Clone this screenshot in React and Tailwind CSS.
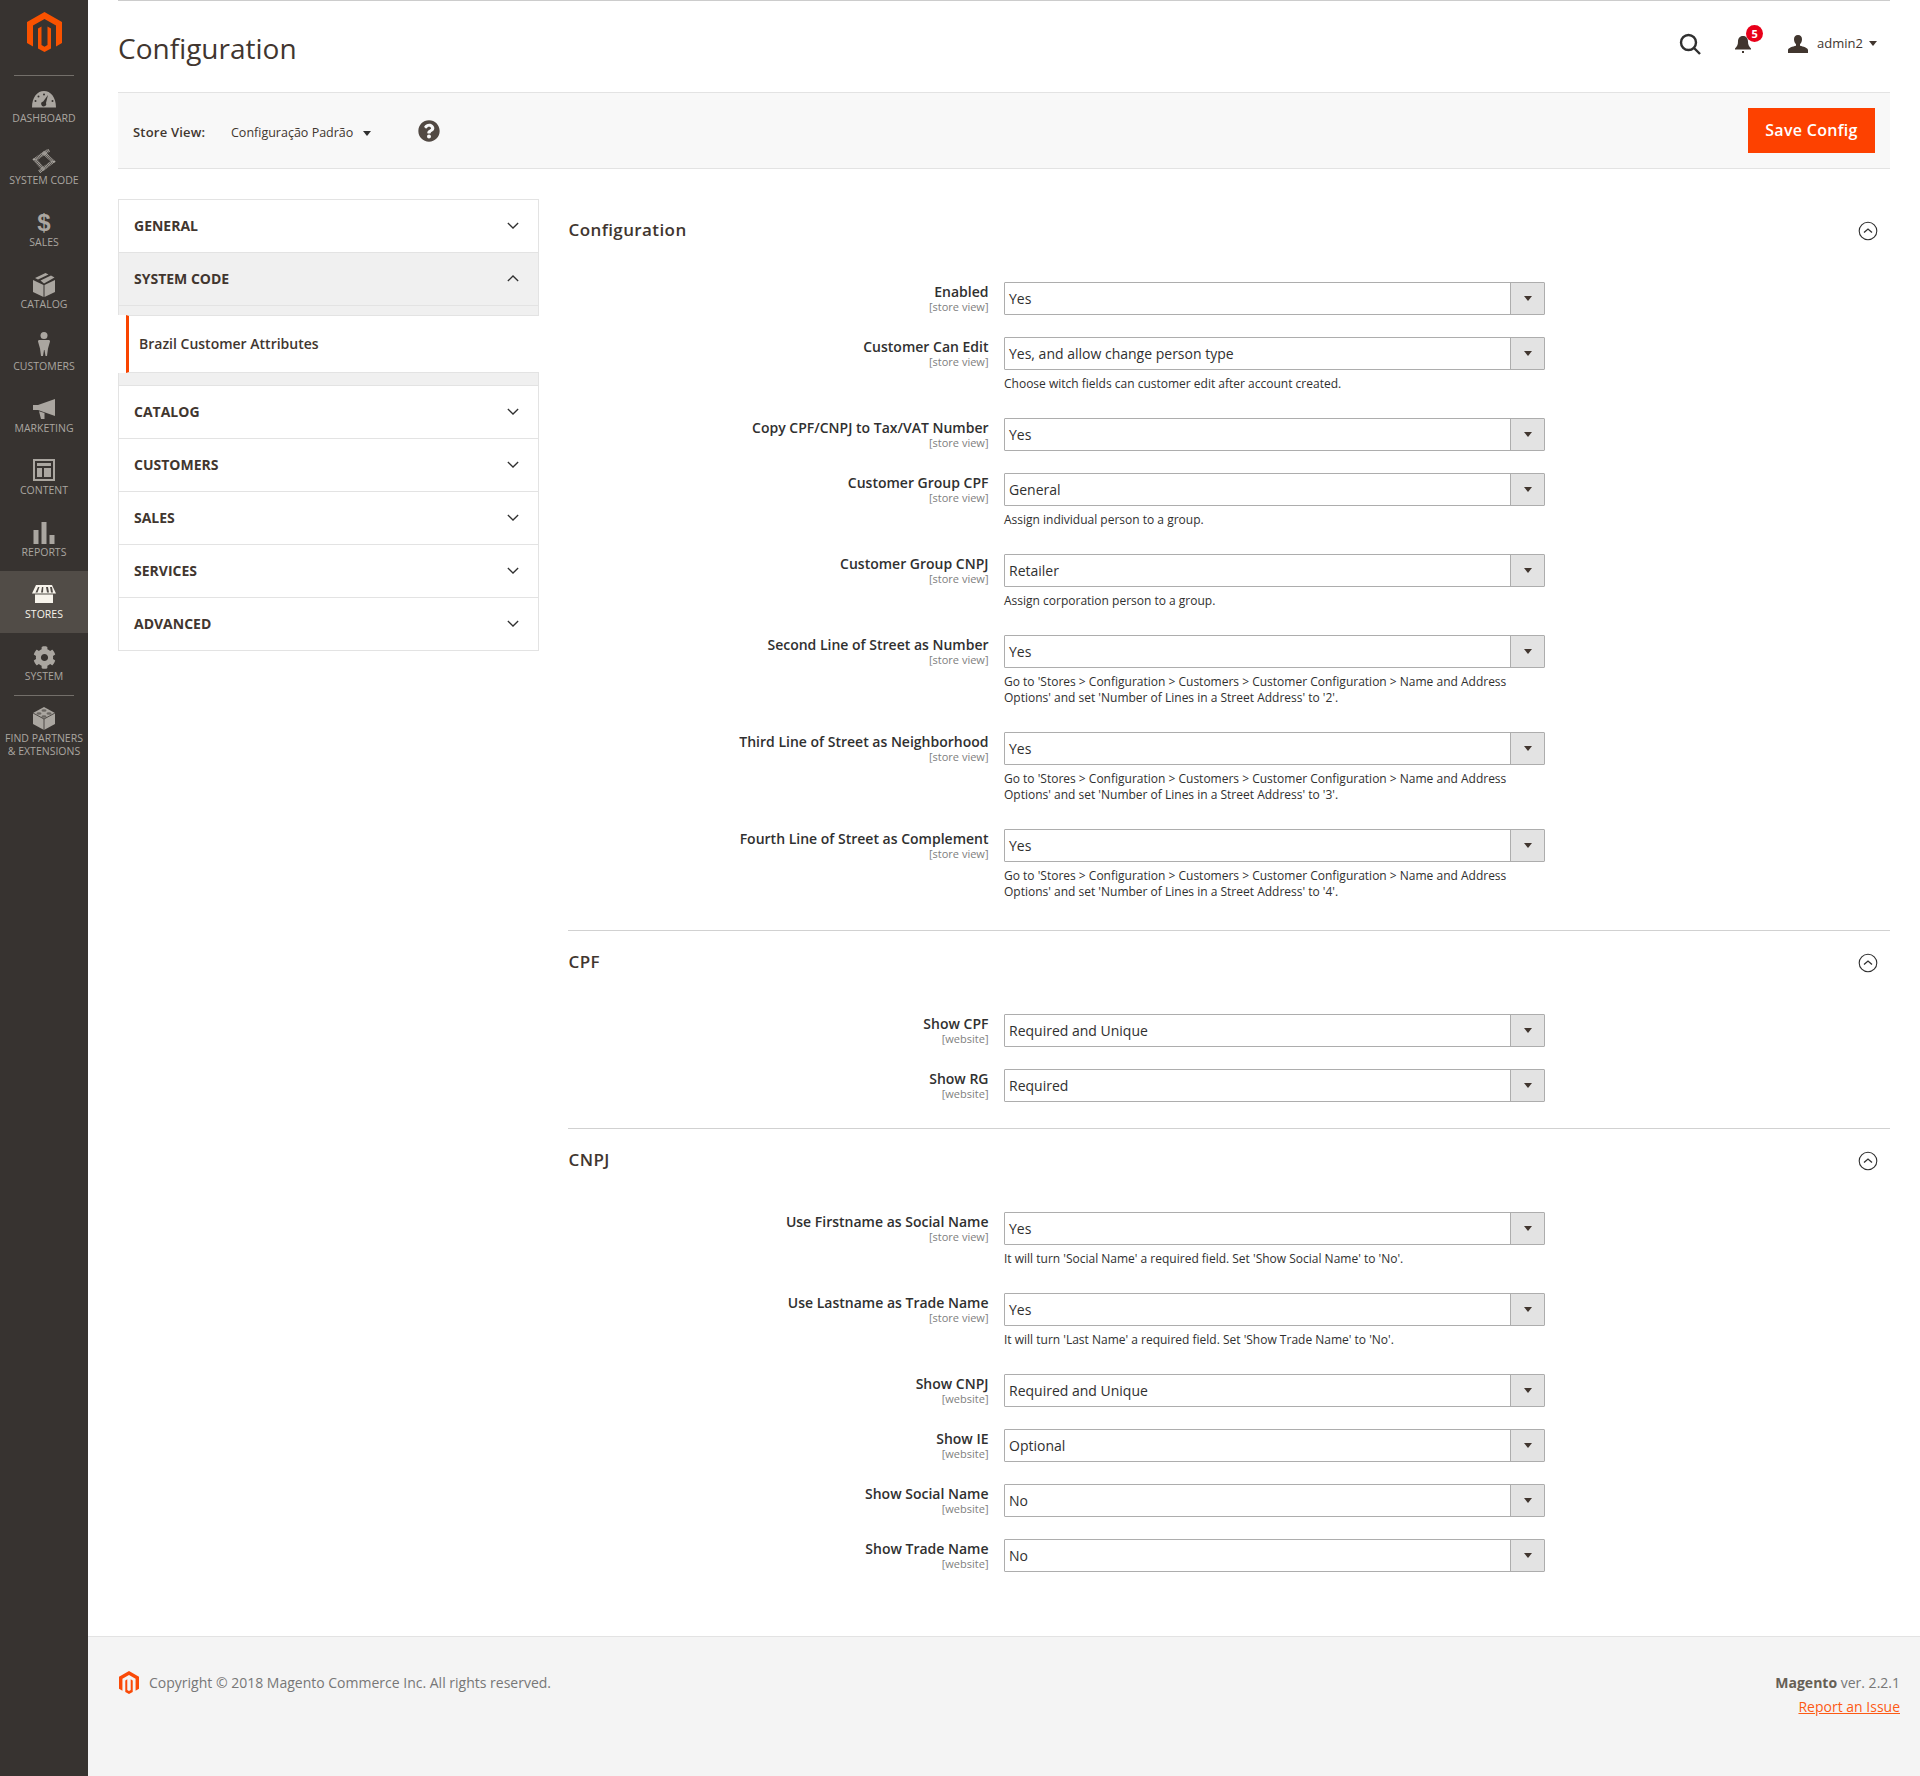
import React from "react";
import { FaCog, FaQuestionCircle } from "react-icons/fa";

const MagentoLogo = ({ className, fill = "#f95200" }) => (
  <svg viewBox="0 0 35 40" className={className} fill={fill}>
    <path d="M17.5 0 35 10v21l-6 3.5v-21L17.5 7 6 13.5v21L0 31V10z" />
    <path d="M11 16.5l3.500-2V33l3 1.800 3-1.800V14.500l3.500 2v20L17.500 40 11 36.500z" />
  </svg>
);

const icon = "w-[24px] h-[24px] fill-[#aaa6a0]";

const navItems = [
  {
    label: "DASHBOARD",
    icon: (
      <svg viewBox="0 0 24 24" className={icon}>
        <path d="M0 20.500C0 10 5.500 4 12 4s12 6 12 16.500H0zM12 6.500a1 1 0 100 2 1 1 0 000-2zM6.500 8.500a1 1 0 100 2 1 1 0 000-2zM3.500 13a1 1 0 100 2 1 1 0 000-2zM20.500 13a1 1 0 100 2 1 1 0 000-2zM16 8l-4.800 6.500a2.500 2.500 0 102.800 1.500z" fillRule="evenodd" />
      </svg>
    ),
  },
  {
    label: "SYSTEM CODE",
    icon: (
      <svg viewBox="0 0 24 24" className="w-[24px] h-[24px]" fill="none" stroke="#aaa6a0" strokeWidth="3.500" strokeDasharray=".9 .6">
        <polyline points="17,1 3,10.500 12,21" />
        <polyline points="11,3 21,12.500 7,23" />
      </svg>
    ),
  },
  {
    label: "SALES",
    icon: <span className="font-bold text-[24px] leading-[24px] text-[#aaa6a0] [font-family:'Liberation_Sans',sans-serif]">$</span>,
  },
  {
    label: "CATALOG",
    icon: (
      <svg viewBox="0 0 24 24" className={icon}>
        <path d="M11.500 12L1 7v12l10.500 5zM12.500 12v12L23 19V7zM3 5l10.500-5 3 1.500L6 6.500zM8.500 7.500L19 2.500 22.500 4.500 12 10.500z" />
      </svg>
    ),
  },
  {
    label: "CUSTOMERS",
    icon: (
      <svg viewBox="0 0 24 24" className={icon + " -translate-y-[3px]"}>
        <circle cx="12" cy="3.500" r="3.500" />
        <path d="M7.500 8h9c1 0 1.500.5 1.500 1.500l-2 7-1 7.500h-1.500l-1-6-.5 0-1 6H9l-1-7.500-2-7C6 8.500 6.500 8 7.500 8z" />
      </svg>
    ),
  },
  {
    label: "MARKETING",
    icon: (
      <svg viewBox="0 0 24 24" className={icon}>
        <path d="M1 8h5L23 2v17L6 13H1zM7 14.200l5.500 1.800V22h-3.500z" />
      </svg>
    ),
  },
  {
    label: "CONTENT",
    icon: (
      <svg viewBox="0 0 24 24" className={icon + " -translate-y-[1px]"}>
        <path fillRule="evenodd" d="M1 1h22v22H1zM3 3v18h18V3zM5 5h14v3H5zM5 10h5v9H5zM12 10h7v9h-7z" />
      </svg>
    ),
  },
  {
    label: "REPORTS",
    icon: (
      <svg viewBox="0 0 24 24" className={icon + " -translate-y-[1px]"}>
        <path d="M1.500 10h5v14h-5zM9.500 2h5v22h-5zM17.500 15h5v9h-5z" />
      </svg>
    ),
  },
  {
    label: "STORES",
    active: true,
    icon: (
      <svg viewBox="0 0 24 24" className="w-[24px] h-[24px] fill-[#f7f3eb] -translate-y-[1px]">
        <path fillRule="evenodd" d="M3 20V11.500h18V20zM4 2h16l4 8.500H0zM6 4L3.500 9.500h2L7.500 4zM10 4L9 9.500h2L11.300 4zM14 4L15 9.500h2L16 4zM18 4L19 9.500h2L20 4z" transform="translate(0 1)" />
      </svg>
    ),
  },
  {
    label: "SYSTEM",
    icon: <FaCog className="w-[23px] h-[23px] text-[#aaa6a0]" />,
  },
  {
    label: (
      <>
        FIND PARTNERS
        <br />& EXTENSIONS
      </>
    ),
    icon: (
      <svg viewBox="0 0 24 24" className={icon + " -translate-y-[2px]"}>
        <path d="M12 1l11 6v11l-11 6-11-6V7z" />
        <path d="M12 13v11M1 7l11 6 11-6" stroke="#373330" strokeWidth=".8" fill="none" />
        <ellipse cx="12" cy="4.500" rx="2.500" ry="1.200" fill="#373330" opacity=".55" />
        <ellipse cx="7" cy="7.500" rx="2.500" ry="1.200" fill="#373330" opacity=".55" />
        <ellipse cx="17" cy="7.500" rx="2.500" ry="1.200" fill="#373330" opacity=".55" />
        <ellipse cx="12" cy="10.500" rx="2.500" ry="1.200" fill="#373330" opacity=".55" />
      </svg>
    ),
  },
];

const Sidebar = () => (
  <aside className="w-[88px] shrink-0 bg-[#373330] flex flex-col">
    <div className="h-[75px] flex justify-center pt-[12px]">
      <MagentoLogo className="w-[35px] h-[40px]" />
    </div>
    {navItems.map((item, i) => (
      <React.Fragment key={i}>
        {(i === 0 || i === 10) && <div className="h-px mx-[14px] bg-[#736f6a]" />}
        <div
          className={
            "flex flex-col items-center text-[10.5px] leading-[13px] text-center whitespace-nowrap " +
            (i === 0 ? "h-[61px] pt-[11px] " : i === 10 ? "pt-[12px] " : "h-[62px] pt-[12px] ") +
            (item.active ? "bg-[#514c47] text-[#f7f3eb]" : "text-[#aaa6a0]")
          }
        >
          <div className="h-[24px] flex items-center justify-center">{item.icon}</div>
          <div className={i === 10 ? "" : "mt-[1px]"}>{item.label}</div>
        </div>
      </React.Fragment>
    ))}
  </aside>
);

const Caret = ({ className }) => (
  <div className={"w-0 h-0 border-x-[4px] border-x-transparent border-t-[5px] " + className} />
);

const Chevron = ({ up }) => (
  <svg viewBox="0 0 14 8" className="w-[12px] h-[7px]" fill="none" stroke="#303030" strokeWidth="1.500">
    <path d={up ? "M1 7l6-6 6 6" : "M1 1l6 6 6-6"} />
  </svg>
);

const SideGroup = ({ title, open }) => (
  <div
    className={
      "h-[53px] pl-[15px] pr-[19px] pb-[1px] flex items-center justify-between border-t border-x border-[#e3e3e3] " +
      (open ? "bg-[#f0f0f0]" : "bg-white")
    }
  >
    <span className="text-[14px] font-bold text-[#41362f]">{title}</span>
    <Chevron up={open} />
  </div>
);

const ConfigTabs = () => (
  <div className="w-[421px] shrink-0 self-start border-b border-[#e3e3e3]">
    <SideGroup title="GENERAL" />
    <SideGroup title="SYSTEM CODE" open />
    <div className="h-[10px] bg-[#f0f0f0] border-t border-x border-[#e3e3e3]" />
    <div className="pl-[8px] bg-white">
      <div className="h-[58px] border-l-[3px] border-l-[#f94400] border-y border-y-[#e3e3e3] pl-[10px] pb-[1px] flex items-center text-[14px] font-semibold text-[#41362f]">
        Brazil Customer Attributes
      </div>
    </div>
    <div className="h-[12px] bg-[#f0f0f0] border-x border-[#e3e3e3]" />
    <SideGroup title="CATALOG" />
    <SideGroup title="CUSTOMERS" />
    <SideGroup title="SALES" />
    <SideGroup title="SERVICES" />
    <SideGroup title="ADVANCED" />
  </div>
);

const Row = ({ label, scope, value, note }) => (
  <div className="flex gap-[16px] mb-[22px]">
    <div className="w-[420px] pl-[1px] text-right translate-x-[0.5px]">
      <div className="text-[14px] leading-[19px] font-semibold text-[#303030]">{label}</div>
      <div className="text-[11px] leading-[12px] text-[#808080]">[{scope}]</div>
    </div>
    <div className="w-[541px]">
      <div className="h-[33px] flex border border-[#adadad] rounded-[1px] text-[14px] text-[#303030]">
        <div className="flex-1 pl-[4px] flex items-center">{value}</div>
        <div className="w-[34px] bg-[#e3e3e3] border-l border-[#adadad] flex items-center justify-center">
          <Caret className="border-t-[#41362f]" />
        </div>
      </div>
      {note && (
        <div className="pt-[6px] pb-[4px] text-[12px] leading-[16px] text-[#303030]">{note}</div>
      )}
    </div>
  </div>
);

const Section = ({ title, rows, last }) => (
  <section className={last ? "" : "border-b border-[#d1d1d1] pb-[4px]"}>
    <div className="h-[63px] flex items-center justify-between pl-[0.5px] pr-[12px] mb-[20px]">
      <h2 className="text-[17px] font-semibold tracking-[0.4px] text-[#41362f] -mt-[2px]">{title}</h2>
      <svg viewBox="0 0 20 20" className="w-[20px] h-[20px]" fill="none" stroke="#303030" strokeWidth="1.100">
        <circle cx="10" cy="10" r="8.800" />
        <path d="M6 11.500L10 8l4 3.500" strokeWidth="1.300" />
      </svg>
    </div>
    {rows.map((r, i) => (
      <Row key={i} {...r} />
    ))}
  </section>
);

const addressNote = (n) => (
  <>
    Go to 'Stores &gt; Configuration &gt; Customers &gt; Customer Configuration &gt; Name and Address
    <br />
    Options' and set 'Number of Lines in a Street Address' to '{n}'.
  </>
);

const sv = "store view";
const ws = "website";

const configRows = [
  { label: "Enabled", scope: sv, value: "Yes" },
  { label: "Customer Can Edit", scope: sv, value: "Yes, and allow change person type", note: "Choose witch fields can customer edit after account created." },
  { label: "Copy CPF/CNPJ to Tax/VAT Number", scope: sv, value: "Yes" },
  { label: "Customer Group CPF", scope: sv, value: "General", note: "Assign individual person to a group." },
  { label: "Customer Group CNPJ", scope: sv, value: "Retailer", note: "Assign corporation person to a group." },
  { label: "Second Line of Street as Number", scope: sv, value: "Yes", note: addressNote(2) },
  { label: "Third Line of Street as Neighborhood", scope: sv, value: "Yes", note: addressNote(3) },
  { label: "Fourth Line of Street as Complement", scope: sv, value: "Yes", note: addressNote(4) },
];

const cpfRows = [
  { label: "Show CPF", scope: ws, value: "Required and Unique" },
  { label: "Show RG", scope: ws, value: "Required" },
];

const cnpjRows = [
  { label: "Use Firstname as Social Name", scope: sv, value: "Yes", note: "It will turn 'Social Name' a required field. Set 'Show Social Name' to 'No'." },
  { label: "Use Lastname as Trade Name", scope: sv, value: "Yes", note: "It will turn 'Last Name' a required field. Set 'Show Trade Name' to 'No'." },
  { label: "Show CNPJ", scope: ws, value: "Required and Unique" },
  { label: "Show IE", scope: ws, value: "Optional" },
  { label: "Show Social Name", scope: ws, value: "No" },
  { label: "Show Trade Name", scope: ws, value: "No" },
];

const App = () => (
  <div className="min-h-[1776px] flex bg-white [font-family:'Open_Sans',sans-serif]">
    <Sidebar />
    <div className="flex-1 min-w-0 flex flex-col">
      <main className="px-[30px] flex-1">
        <header className="h-[92px] border-t border-[#cccccc] flex items-center justify-between">
          <h1 className="text-[28px] text-[#41362f] leading-[34px] mt-[3px]">Configuration</h1>
          <div className="flex items-center mr-[13px] -mt-[6px]">
            <svg viewBox="0 0 22 22" className="w-[22px] h-[22px] mr-[33px]" fill="none" stroke="#303030" strokeWidth="2.400">
              <circle cx="9.500" cy="9.500" r="7.500" />
              <path d="M15 15l6 6" />
            </svg>
            <div className="relative mr-[36px]">
              <svg viewBox="0 0 18 18" className="w-[18px] h-[18px] fill-[#41362f]">
                <path d="M9 1c3.500 0 5 2.500 5 5.500 0 3.500 1 5 3 7v1H1v-1c2-2 3-3.500 3-7C4 3.500 5.500 1 9 1zM8 16h2v2H8z" />
              </svg>
              <span className="absolute -top-[10px] left-[12px] w-[17px] h-[17px] rounded-full bg-[#e8001a] text-white text-[11px] font-bold leading-[17px] text-center">5</span>
            </div>
            <svg viewBox="0 0 20 18" className="w-[20px] h-[18px] fill-[#41362f] mr-[9px]">
              <path d="M10 0c2.600 0 4 1.800 4 4.200 0 2.200-.9 4-2 5v1.500c3 .8 8 2 8 4.300V18H0v-3c0-2.300 5-3.500 8-4.300V9.200c-1.100-1-2-2.800-2-5C6 1.800 7.400 0 10 0z" />
            </svg>
            <span className="text-[13px] text-[#41362f] mr-[6px]">admin2</span>
            <Caret className="border-t-[#41362f]" />
          </div>
        </header>
        <div className="h-[77px] bg-[#f8f8f8] border-y border-[#e3e3e3] flex items-center justify-between pl-[15px] pr-[15px]">
          <div className="flex items-center pt-[5px] text-[#41362f]">
            <span className="text-[13px] font-semibold w-[98px] tracking-[0.2px]">Store View:</span>
            <span className="text-[12.5px] mr-[10px]">Configuração Padrão</span>
            <Caret className="border-t-[#303030]" />
            <FaQuestionCircle className="w-[22px] h-[22px] ml-[47px] -mt-[4px] text-[#514943]" />
          </div>
          <button className="w-[127px] h-[45px] pb-[2px] bg-[#fd4100] text-white text-[16px] font-semibold tracking-[0.3px]">Save Config</button>
        </div>
        <div className="flex gap-[29px] mt-[30px]">
          <ConfigTabs />
          <div className="flex-1 min-w-0">
            <Section title="Configuration" rows={configRows} />
            <Section title="CPF" rows={cpfRows} />
            <Section title="CNPJ" rows={cnpjRows} last />
          </div>
        </div>
      </main>
      <footer className="h-[140px] border-t border-[#e3e3e3] bg-[#f4f4f4] pl-[31px] pr-[20px] pt-[34px] flex justify-between text-[14px] text-[#777777]">
        <div className="flex items-start">
          <MagentoLogo className="w-[20px] h-[23px] mr-[10px]" fill="#fa4a08" />
          <span className="leading-[23px]">Copyright © 2018 Magento Commerce Inc. All rights reserved.</span>
        </div>
        <div className="text-right leading-[23px]">
          <div>
            <b className="font-bold text-[#676056]">Magento</b> ver. 2.2.1
          </div>
          <a className="underline text-[#fd5a14] leading-[25px] block">Report an Issue</a>
        </div>
      </footer>
    </div>
  </div>
);

export default App;
